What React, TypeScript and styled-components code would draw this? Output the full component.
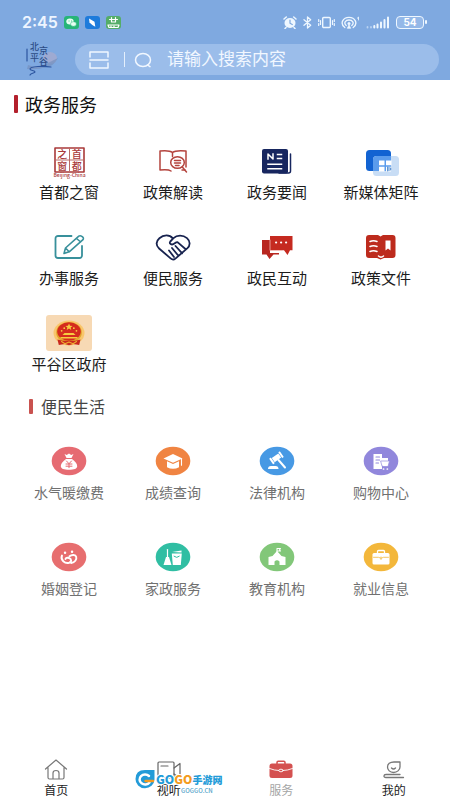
import React from "react";
import styled, { createGlobalStyle } from "styled-components";

const cjk = `"Noto Sans CJK SC", sans-serif`;

const GlobalStyle = createGlobalStyle`
  * { box-sizing: border-box; }
  body { margin: 0; background: #fff; font-family: ${cjk}; }
  svg { display: block; flex: none; }
  svg text { font-family: ${cjk}; }
`;

const Page = styled.div`
  min-height: 100vh;
  display: flex;
  flex-direction: column;
  background: #fff;
`;

const Header = styled.header`
  background: #7fa9e0;
  padding-bottom: 5px;
`;

const StatusBar = styled.div`
  display: flex;
  align-items: center;
  justify-content: space-between;
  height: 44px;
  padding: 0 23px 0 22px;
`;

const StatusGroup = styled.div`
  display: flex;
  align-items: center;
  gap: 6px;
`;

const Time = styled.span`
  font: 600 16px/20px Inter, sans-serif;
  color: #eef5ff;
`;

const Battery = styled.span`
  display: flex;
  align-items: center;
  gap: 1px;
  &::after {
    content: "";
    width: 2px;
    height: 4px;
    border-radius: 1px;
    background: #eef7ff;
  }
`;

const BatteryLevel = styled.span`
  width: 28px;
  height: 13px;
  border: 1px solid #eef7ff;
  border-radius: 4px;
  background: #94b8e8;
  color: #fff;
  font: 700 10px/11px Inter, sans-serif;
  text-align: center;
`;

const SearchRow = styled.div`
  display: flex;
  align-items: center;
  gap: 14px;
  padding: 0 11px 0 21px;
`;

const Brand = styled.a`
  margin: -4px 0 -2px;
`;

const SearchPill = styled.form`
  flex: 1;
  min-width: 0;
  height: 31px;
  display: flex;
  align-items: center;
  padding: 0 14px;
  border-radius: 16px;
  background: #9bbdea;
`;

const IconButton = styled.button`
  border: 0;
  padding: 0;
  background: none;
`;

const Divider = styled.span`
  width: 1px;
  height: 15px;
  margin: 0 9px 0 15px;
  background: #e4effc;
`;

const SearchInput = styled.input`
  flex: 1;
  min-width: 0;
  margin-left: 15px;
  padding: 0 0 3px;
  border: 0;
  outline: 0;
  background: none;
  color: #fff;
  font: 400 17px/24px ${cjk};
  &::placeholder { color: #f1f7ff; opacity: 1; }
`;

const Section = styled.section<{ $top: number }>`
  padding: ${(p) => p.$top}px 17px 0;
`;

const Heading = styled.h2<{ $minor?: boolean }>`
  display: flex;
  align-items: center;
  gap: ${(p) => (p.$minor ? 8 : 7)}px;
  margin: 0 0 ${(p) => (p.$minor ? 25 : 27)}px ${(p) => (p.$minor ? 12 : -3)}px;
  color: ${(p) => (p.$minor ? "#444" : "#111")};
  font-size: ${(p) => (p.$minor ? 16 : 18)}px;
  line-height: 24px;
  font-weight: 400;
  &::before {
    content: "";
    width: 4px;
    height: ${(p) => (p.$minor ? 15 : 18)}px;
    border-radius: 1px;
    background: ${(p) => (p.$minor ? "#c9524f" : "#b3202c")};
  }
`;

const Grid = styled.div<{ $gap: number }>`
  display: grid;
  grid-template-columns: repeat(4, 1fr);
  row-gap: ${(p) => p.$gap}px;
`;

const Service = styled.a<{ $soft?: boolean }>`
  display: flex;
  flex-direction: column;
  align-items: center;
  gap: 3px;
  color: ${(p) => (p.$soft ? "#707070" : "#1c1c1c")};
  font-size: ${(p) => (p.$soft ? 14 : 15)}px;
  line-height: 20px;
  white-space: nowrap;
  text-decoration: none;
`;

const TabBar = styled.nav`
  position: relative;
  display: grid;
  grid-template-columns: repeat(4, 1fr);
  margin-top: auto;
  padding-bottom: 2px;
`;

const Tab = styled.a<{ $active?: boolean }>`
  display: flex;
  flex-direction: column;
  align-items: center;
  color: ${(p) => (p.$active ? "#a5a5a5" : "#222")};
  font-size: 12px;
  line-height: 16px;
  text-decoration: none;
`;

const Watermark = styled.div`
  position: absolute;
  left: 135px;
  bottom: 4px;
`;

const Art = ({ children, w = 36, h = 36 }: { children: React.ReactNode; w?: number; h?: number }) => (
  <svg width={w} height={h} viewBox={`0 0 ${w} ${h}`} fill="none" strokeLinecap="round" strokeLinejoin="round" aria-hidden="true">
    {children}
  </svg>
);

const Disc = ({ color, children }: { color: string; children: React.ReactNode }) => (
  <Art>
    <ellipse cx="18" cy="18" rx="17.3" ry="14.3" fill={color} />
    {children}
  </Art>
);

const CapitalIcon = () => (
  <Art>
    <rect x="4" y="5" width="29" height="24" stroke="#a93a3a" strokeWidth="1.6" />
    <path d="M18.5 5v24M4 17h29" stroke="#b96a66" strokeWidth="1" />
    <g fill="#a93a3a" fontWeight="500" fontSize="10" textAnchor="middle">
      <text x="11.3" y="14.8">之</text>
      <text x="25.7" y="14.8">首</text>
      <text x="11.3" y="26.8">窗</text>
      <text x="25.7" y="26.8">都</text>
    </g>
    <text x="18.5" y="34" fill="#a93a3a" fontSize="5" fontWeight="500" textAnchor="middle">Beijing-China</text>
  </Art>
);

const PolicyIcon = () => (
  <Art>
    <path d="M17.5 9.500C15 7.500 10 7.500 5 8v19c5-.5 9-.5 11 1M17.500 9.500C20 7.500 26 7.500 31 8v16" stroke="#b4443e" strokeWidth="1.5" />
    <path d="M17.5 9.5v4M30 27h-3" stroke="#b4443e" strokeWidth="1.5" />
    <ellipse cx="22.5" cy="19.5" rx="6.8" ry="5.8" stroke="#b4443e" strokeWidth="1.5" />
    <path d="M27.3 24l4.2 5M19.5 17.5h6M19.5 20h6M20.5 22.4h3.5" stroke="#b4443e" strokeWidth="1.5" />
  </Art>
);

const NewsIcon = () => (
  <Art>
    <path d="M31.5 11v17a2 2 0 0 1-2 2H20" stroke="#17265f" strokeWidth="1.5" />
    <rect x="3" y="6" width="26" height="24.5" rx="2" fill="#17265f" />
    <path d="M9 16v-5l5 5v-5M18.5 11.5h4M18.5 15.5h4M9 21.2h13.500M9 25.7h13.500" stroke="#fff" strokeWidth="1.5" strokeLinecap="square" />
  </Art>
);

const MediaIcon = () => (
  <Art>
    <rect x="3" y="7" width="25" height="21" rx="3.5" fill="#1263d2" />
    <rect x="10" y="13" width="26" height="20" rx="3.5" fill="#c8ddf5" />
    <path d="M10 16.5a3.5 3.5 0 0 1 3.5-3.5H28v11.5a3.5 3.5 0 0 1-3.5 3.5H10z" fill="#5b9cec" />
    <path d="M16 17.500h5.500v4.700H16zM23 17.500h5.500v4.700H23zM16 23.700h5.500v4.700H16zM23 23.700h5v4.700h-5z" fill="#fff" />
    <path d="M24.7 24v4M24.7 25h3v2h-3" stroke="#3e7fc7" strokeWidth=".9" />
  </Art>
);

const EditIcon = () => (
  <Art>
    <path d="M20.5 7H7a2.5 2.5 0 0 0-2.5 2.5v17A2.5 2.5 0 0 0 7 29h21.5a2.5 2.5 0 0 0 2.5-2.5V17" stroke="#38909b" strokeWidth="1.8" />
    <path d="M13 24.5l1.5-5.5L27.8 7.2c1.7-1.5 6 1.500 4.200 3.500L18.200 22.800zM25.500 9.500l4.200 3.500M14.500 19l3.700 3.800" stroke="#38909b" strokeWidth="1.6" />
  </Art>
);

const HeartIcon = () => (
  <Art>
    <path d="M17.8 9.3C14.5 5.4 8.5 5.7 4.4 9.2c-3.6 3.1-3.7 7.3-.3 10.3L15.6 29.4c1.6 1.4 3.3 1.5 4.8.2L32.2 19.400c3.300-3 3.200-7.200-.2-10.300-4-3.400-10-3.400-13.500.1l-3.200 3.300c-1.200 1.500 0 3.100 1.800 3 2.200 0 3.200-2.500 5.400-2.400L31 20.500M20.500 17l6.700 7.400M17 19l6.200 7.500M14 21.500l5 6.500" stroke="#18234f" strokeWidth="1.8" />
  </Art>
);

const ChatIcon = () => (
  <Art>
    <path d="M3 11h8v13h9v1.500h-5.500l-4 4.500-3-4.500H3z" fill="#b82720" />
    <path d="M11 7h22.500v14.300H31L28.500 26 25 21.300H11z" fill="#c52a20" />
    <path d="M11 11v10.500h12" stroke="#f1b8b2" strokeWidth=".8" />
    <path d="M17 13.500h.2M22 13.500h.2M27 13.500h.2" stroke="#fff" strokeWidth="2" />
  </Art>
);

const DocumentIcon = () => (
  <Art>
    <path d="M6 6H15l2.500 1.500L20 6h9.500q3 0 3 3v17q0 3-3 3H21l-3.500 1.500L14 29H6q-3 0-3-3V9q0-3 3-3z" fill="#bd2b1d" />
    <path d="M7 12.500q3.500-1.500 7 0M7 17.500q3.500-1.500 7 0M7 22.500q3.500-1.500 7 0M15.500 27q2.500 2.200 5 0" stroke="#fff" strokeWidth="1.5" />
    <path d="M22.500 11.500h5v10l-2.500-2-2.500 2z" fill="#fff" />
  </Art>
);

const EmblemIcon = () => (
  <Art w={46} h={36}>
    <rect width="46" height="36" rx="3" fill="#f7d9b4" />
    <ellipse cx="23" cy="18" rx="15.5" ry="12.5" fill="#f9c66c" />
    <ellipse cx="23" cy="17.5" rx="12.8" ry="10.5" fill="#e2a42c" />
    <ellipse cx="23" cy="16.5" rx="11.8" ry="9.2" fill="#d52b1e" />
    <path d="M23 8.500l1 2.200 2.600.2-2 1.600.7 2.400-2.300-1.300-2.300 1.300.7-2.400-2-1.600 2.600-.2zM16.500 20l2-2h9l2 2zM14.500 22h17v1.600h-17z" fill="#f6cb41" />
    <path d="M15.6 15.8h.1M18.2 13.2h.1M27.8 13.2h.1M30.4 15.8h.1" stroke="#f6cb41" strokeWidth="1.7" />
    <path d="M11.5 24.5l5 1.2h13l5-1.2-1.3 5.4-6-.9-4.2 1.3-4.2-1.3-6 .9z" fill="#c9281f" />
    <path d="M15.5 26.5l3.5 2.3 4-1.8 4 1.8 3.5-2.3" stroke="#edae32" strokeWidth="1.1" />
  </Art>
);

const MoneyIcon = () => (
  <Disc color="#e66b72">
    <path d="M13.5 11l2.200 1 2.300-1.500 2.200 1.500 2.300-1-2 4h-5z" fill="#fff" />
    <path d="M15 16h6c3 2 5.200 4.800 5.200 7.200 0 2.400-3.200 3.600-8.200 3.600s-8.200-1.200-8.200-3.600C9.800 20.800 12 18 15 16z" fill="#fff" />
    <path d="M15.500 18l2.500 2.700 2.500-2.700M18 20.700v4M15 21h6M15 23.200h6" stroke="#e66b72" strokeWidth="1" />
  </Disc>
);

const CapIcon = () => (
  <Disc color="#f08442">
    <path d="M8.500 15.500l9.500-4.500 9.500 4.500-9.500 4.200z" fill="#fff" />
    <path d="M12 18.300l6 2.700 6-2.700v6q-6 3-12 0z" fill="#fff" />
    <path d="M26.500 15.800v6.500" stroke="#fff" strokeWidth="1.100" />
  </Disc>
);

const GavelIcon = () => (
  <Disc color="#4799e4">
    <g transform="translate(17.500 14.800) rotate(-35)" fill="#fff">
      <rect x="-4" y="-2.500" width="8" height="5" />
      <rect x="-6.500" y="-3.500" width="2" height="7" rx=".6" />
      <rect x="4.500" y="-3.500" width="2" height="7" rx=".6" />
    </g>
    <path d="M19.500 17l6.500 7.500" stroke="#fff" strokeWidth="2" />
    <path d="M9 26q0-3 3-3h4.500q3 0 3 3z" fill="#fff" />
  </Disc>
);

const ShoppingIcon = () => (
  <Disc color="#9187dc">
    <path d="M10.500 11h8.500v4h6v3h-6v8h-8.500z" fill="#fff" />
    <path d="M13 14h3.500M13 17h3.500M13 20h2.500" stroke="#9187dc" strokeWidth="1.200" />
    <path d="M18 18h8.500L25 23.500h-5.500z" fill="#fff" stroke="#9187dc" strokeWidth=".7" />
    <path d="M20.500 26h.1M24.300 26h.1" stroke="#fff" strokeWidth="1.700" />
  </Disc>
);

const MarriageIcon = () => (
  <Disc color="#e76e6f">
    <path d="M11 16.500c-2 4.500 3 8.500 7 7.300 3.200-1.200 2.400-4 0-4.800-1.800-.7-3.500 0-3.500 1" stroke="#fff" strokeWidth="1.900" />
    <path d="M18.500 17.300c2.500-2 6-1.700 6.700.5.800 2.700-1.400 5.700-5 6.200" stroke="#fff" strokeWidth="1.900" />
    <path d="M14 13.800h.1M21 12.800h.1" stroke="#fff" strokeWidth="2.400" />
  </Disc>
);

const CleaningIcon = () => (
  <Disc color="#30bea3">
    <path d="M12.500 10.500V19" stroke="#fff" strokeWidth="1.200" />
    <path d="M11 18h3l2.500 8h-8zM16.800 14.500h10l-1 11.500h-8zM17 13l9.500-1.500v2z" fill="#fff" />
    <path d="M19 17.300q2.800 2.400 5.300 0" stroke="#30bea3" strokeWidth="1" />
  </Disc>
);

const SchoolIcon = () => (
  <Disc color="#82c779">
    <path d="M9.500 18l4-1 4.500-5 4.500 5 4 1v8h-6v-3.500q-2.500-2.500-5 0V26h-6z" fill="#fff" />
    <path d="M18 14V9.500h3.500l-1 1.300 1 1.200H18" stroke="#fff" strokeWidth="1.100" />
  </Disc>
);

const JobIcon = () => (
  <Disc color="#f3b73b">
    <path d="M14.500 14v-1.500q0-1 1-1h5q1 0 1 1V14" stroke="#fff" strokeWidth="1.300" />
    <rect x="9.500" y="14" width="17" height="11.500" rx="1.500" fill="#fff" />
    <path d="M10.500 18.300h5l2.500 1 2.500-1h5M18 18v2.500" stroke="#f3b73b" strokeWidth=".8" />
  </Disc>
);

const HomeTabIcon = () => (
  <Art w={24} h={24}>
    <path d="M1.500 11L12 2l10.500 9M4 9.500v10q0 1.500 1.500 1.500h13q1.500 0 1.500-1.500v-10M9 21v-6q0-2.500 3-2.500t3 2.500v6" stroke="#777" strokeWidth="1.200" />
  </Art>
);

const VideoTabIcon = () => (
  <Art w={24} h={24}>
    <rect x="1" y="4" width="16" height="16" rx="1" stroke="#666" strokeWidth="1.200" />
    <path d="M4 8h7M17 10l6-4.500V20l-6-4" stroke="#666" strokeWidth="1.200" />
  </Art>
);

const ServiceTabIcon = () => (
  <Art w={24} h={24}>
    <path d="M8 6V4.500Q8 3.300 9.200 3.300h5.600Q16 3.300 16 4.500V6" stroke="#d45150" strokeWidth="1.500" />
    <rect x=".5" y="5.500" width="23" height="14.500" rx="2.500" fill="#d45150" />
    <path d="M.5 10.500q5 2 9.300 2M23.500 10.500q-5 2-9.300 2" stroke="#fff" strokeWidth=".9" />
    <ellipse cx="12" cy="12.500" rx="2.200" ry="1.300" stroke="#fff" strokeWidth=".9" />
  </Art>
);

const MeTabIcon = () => (
  <Art w={24} h={24}>
    <path d="M18 4h-6C8 4 5.500 6 5.500 9s2.500 5.500 6 5.500S18 12 18 9zM9.500 10q2 2 4 0" stroke="#777" strokeWidth="1.300" />
    <path d="M21.500 19.500H4c-3 0-2.500-3 0-3h14" stroke="#777" strokeWidth="1.300" />
  </Art>
);

const BrandLogo = () => (
  <Art w={40} h={37}>
    <ellipse cx="29" cy="18" rx="7" ry="6" fill="#b3abc8" opacity=".6" />
    <path d="M7 25q7 3 13 1 5-2 17-8-5 9-12 9-8 3-19 2z" fill="#7590bd" opacity=".7" />
    <g fill="#2c4c86" fontWeight="500" fontSize="9">
      <text x="9" y="10">北</text>
      <text x="18" y="14">京</text>
      <text x="9" y="21">平</text>
      <text x="18" y="25">谷</text>
    </g>
    <path d="M6 9v12M30 27c-7-1-21-1-21 2 0 2 5 1 5 3 0 1-4 1-5 3" stroke="#2c559f" strokeWidth="1.200" />
  </Art>
);

const WeChatChip = () => (
  <Art w={15} h={13}>
    <rect width="15" height="13" rx="3" fill="#27b578" />
    <ellipse cx="6" cy="5.500" rx="3.700" ry="3" fill="#e8fff3" />
    <ellipse cx="9.500" cy="8" rx="3" ry="2.300" fill="#e8fff3" stroke="#27b578" strokeWidth=".5" />
    <path d="M5 5h.1M7.400 5h.1" stroke="#27b578" strokeWidth=".9" />
  </Art>
);

const BirdChip = () => (
  <Art w={15} h={13}>
    <rect width="15" height="13" rx="3" fill="#1e7bdb" />
    <path d="M4 2.500l5.500 3.200.8 5-3-1.700-2.800-2.500z" fill="#fff" />
  </Art>
);

const AppChip = () => (
  <Art w={15} h={13}>
    <rect width="15" height="13" rx="3" fill="#54ad68" />
    <path d="M5.500 1.500V6M9.500 1.500V6M3.500 3.500h8M5.500 6h4M2 9h11l-1 2.500H3z" stroke="#fff" strokeWidth="1.200" />
    <path d="M4.500 10.200h6" stroke="#fff" strokeWidth="1" strokeDasharray="1 2" />
  </Art>
);

const StatusIcons = () => (
  <StatusGroup>
    <Art w={14} h={13}>
      <ellipse cx="7" cy="7" rx="5.500" ry="5" fill="#eef7ff" />
      <path d="M1 3l2.300-2M13 3l-2.300-2M3 11.500l-1 1M11 11.500l1 1" stroke="#eef7ff" strokeWidth="1.500" />
      <path d="M7 4v3.300l2.300 1.200" stroke="#7fa9e0" strokeWidth="1.200" />
    </Art>
    <Art w={9} h={13}>
      <path d="M1 3.700l6.700 5.500L4.500 12V1l3.200 2.700L1 9.300" stroke="#eef7ff" strokeWidth="1.300" />
    </Art>
    <Art w={17} h={13}>
      <rect x="4.700" y="1.500" width="7.600" height="10" rx="1" stroke="#eef7ff" strokeWidth="1.400" />
      <path d="M2.500 4.500v4M.7 3.500v2M.7 7.500v2M14.500 4.500v4M16.300 3.500v2M16.300 7.500v2" stroke="#eef7ff" strokeWidth="1.200" />
    </Art>
    <Art w={19} h={13}>
      <path d="M3.800 11.500C-1.500 7.500 2 1.300 8 1.300s9.500 6.200 4.200 10.200M5.200 9.500C2.300 7 4.500 4 8 4s5.700 3 2.800 5.500" stroke="#eef7ff" strokeWidth="1.300" />
      <circle cx="8" cy="7.500" r="1.500" fill="#eef7ff" />
      <path d="M6.500 12l1.500-3 1.500 3zM16.500 2l1-1v3" fill="#eef7ff" stroke="#eef7ff" strokeWidth=".8" />
    </Art>
    <Art w={24} h={13}>
      <path d="M1.500 11v.5M5 11v.5" stroke="#b9d2f2" strokeWidth="1.800" />
      <path d="M8.300 10v1.500M11.500 8.500v3M15 6.500v5M18.500 4v7.500M22 1.500v10" stroke="#eef7ff" strokeWidth="2" />
    </Art>
    <Battery><BatteryLevel>54</BatteryLevel></Battery>
  </StatusGroup>
);

const WatermarkLogo = () => (
  <Art w={90} h={28}>
    <path d="M10 2h9.500v9.500A9.500 9 0 1 1 .5 11Q.5 2 10 2z" fill="#239bd8" />
    <path d="M14 8a5.500 5 0 1 0 .5 6.500" stroke="#fff" strokeWidth="2.500" />
    <path d="M10.500 13h7.500" stroke="#f49b20" strokeWidth="2.500" />
    <text x="21" y="16" fontWeight="900" fontSize="12" fill="#239bd8" stroke="#fff" strokeWidth="2" paintOrder="stroke">
      GO<tspan fill="#f49b20">GO</tspan><tspan fontSize="10">手游网</tspan>
    </text>
    <text x="46" y="25" fill="#4e9fc8" fontSize="6" fontWeight="500">GOGGO.CN</text>
  </Art>
);

const government: [string, React.FC][] = [
  ["首都之窗", CapitalIcon],
  ["政策解读", PolicyIcon],
  ["政务要闻", NewsIcon],
  ["新媒体矩阵", MediaIcon],
  ["办事服务", EditIcon],
  ["便民服务", HeartIcon],
  ["政民互动", ChatIcon],
  ["政策文件", DocumentIcon],
  ["平谷区政府", EmblemIcon],
];

const living: [string, React.FC][] = [
  ["水气暖缴费", MoneyIcon],
  ["成绩查询", CapIcon],
  ["法律机构", GavelIcon],
  ["购物中心", ShoppingIcon],
  ["婚姻登记", MarriageIcon],
  ["家政服务", CleaningIcon],
  ["教育机构", SchoolIcon],
  ["就业信息", JobIcon],
];

const tabs: [string, React.FC][] = [
  ["首页", HomeTabIcon],
  ["视听", VideoTabIcon],
  ["服务", ServiceTabIcon],
  ["我的", MeTabIcon],
];

export default function App() {
  return (
    <Page>
      <GlobalStyle />
      <Header>
        <StatusBar>
          <StatusGroup>
            <Time>2:45</Time>
            <WeChatChip />
            <BirdChip />
            <AppChip />
          </StatusGroup>
          <StatusIcons />
        </StatusBar>
        <SearchRow>
          <Brand href="#" aria-label="北京平谷"><BrandLogo /></Brand>
          <SearchPill role="search">
            <IconButton type="button" aria-label="扫一扫">
              <Art w={20} h={18}>
                <path d="M1 6V1h18v5M1 9h18M1 12v5h18v-5" stroke="#f1f7ff" strokeWidth="1.500" />
              </Art>
            </IconButton>
            <Divider />
            <IconButton type="submit" aria-label="搜索">
              <Art w={18} h={16}>
                <ellipse cx="9" cy="8" rx="7.500" ry="6.500" stroke="#f1f7ff" strokeWidth="1.500" />
                <path d="M13.500 13l2.500 1.700" stroke="#f1f7ff" strokeWidth="1.500" />
              </Art>
            </IconButton>
            <SearchInput type="text" aria-label="搜索内容" placeholder="请输入搜索内容" />
          </SearchPill>
        </SearchRow>
      </Header>
      <main>
        <Section $top={12}>
          <Heading>政务服务</Heading>
          <Grid $gap={27}>
            {government.map(([label, Icon]) => (
              <Service href="#" key={label}><Icon />{label}</Service>
            ))}
          </Grid>
        </Section>
        <Section $top={20}>
          <Heading $minor>便民生活</Heading>
          <Grid $gap={37}>
            {living.map(([label, Icon]) => (
              <Service href="#" key={label} $soft><Icon />{label}</Service>
            ))}
          </Grid>
        </Section>
      </main>
      <TabBar>
        {tabs.map(([label, Icon]) => (
          <Tab href="#" key={label} $active={label === "服务"} aria-current={label === "服务" ? "page" : undefined}>
            <Icon />{label}
          </Tab>
        ))}
        <Watermark><WatermarkLogo /></Watermark>
      </TabBar>
    </Page>
  );
}
